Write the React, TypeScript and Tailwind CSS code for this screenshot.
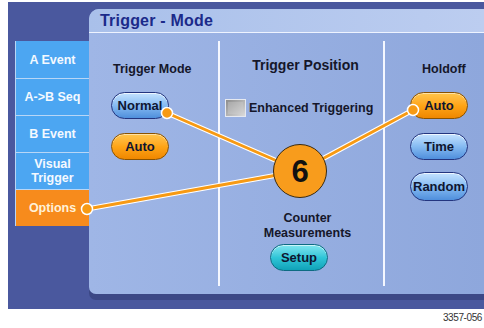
import React from 'react';

const TABS = [
  { label: 'A Event' },
  { label: 'A->B Seq' },
  { label: 'B Event' },
  { label: 'Visual Trigger' },
  { label: 'Options', active: true },
];

const pill = 'w-[58px] h-[27px] rounded-full border-[1.5px] flex items-center justify-center text-[13px] font-bold text-[#0f1630]';
const blue = `${pill} border-[#23357f] bg-gradient-to-b from-[#c4e2ff] via-[#86bbf2] to-[#4f8fdc] shadow-[inset_0_1px_0_rgba(255,255,255,0.7)]`;
const orange = `${pill} border-[#8a5200] bg-gradient-to-b from-[#ffc54a] via-[#ffa516] to-[#ef8700] shadow-[inset_0_1px_0_rgba(255,255,255,0.5)]`;
const teal = `${pill} border-[#0d6b82] bg-gradient-to-b from-[#7de6f0] via-[#2fc6d8] to-[#0fa2b8] shadow-[inset_0_1px_0_rgba(255,255,255,0.6)]`;

export default function App() {
  return (
    <div className="relative w-[484px] h-[328px] bg-white overflow-hidden font-['Liberation_Sans',Arial,sans-serif]">
      <div className="ml-[8px] mt-[2px] h-[307px] bg-[#4a589e] pl-[7px] pt-[7px] flex">
        {/* side tabs */}
        <div className="w-[74px] mt-[32px] self-start flex flex-col border-l border-[#b8d6f6]">
          {TABS.map((t, i) => (
            <div
              key={t.label}
              className={`h-[37px] flex items-center justify-center text-center text-[12.5px] leading-[14px] font-bold ${i > 0 ? 'border-t border-[#b8d6f6]' : ''} ${t.active ? 'bg-[#f78b1c] text-[#fff1d8]' : 'bg-[#4ca6f2] text-[#f4f9ff]'}`}
            >
              {t.label === 'Visual Trigger' ? (<span>Visual<br />Trigger</span>) : t.label}
            </div>
          ))}
        </div>

        {/* panel */}
        <div className="w-[395px] h-[285px] rounded-tl-[10px] rounded-bl-[7px] bg-gradient-to-r from-[#9fb6e6] to-[#8ea7dc] shadow-[0_6px_0_#3c4886] flex flex-col">
          <div className="h-[24px] rounded-tl-[10px] border-b border-[#eef3ff] bg-gradient-to-r from-[#a9c0ea] to-[#bccdf0] pl-[11px] flex items-center">
            <span className="text-[16px] font-bold text-[#1b2a8a] tracking-[0.2px]">Trigger - Mode</span>
          </div>
          <div className="flex-1 flex pt-[8px] pb-[8px]">
            {/* Trigger Mode */}
            <div className="w-[131px] border-r-2 border-[#f4f7ff] pt-[21px]">
              <div className="pl-[24px] text-[12.5px] leading-[14px] font-bold text-[#15172a]">Trigger Mode</div>
              <div className={`${blue} ml-[22px] mt-[16px]`}>Normal</div>
              <div className={`${orange} ml-[22px] mt-[14px]`}>Auto</div>
            </div>
            {/* Trigger Position */}
            <div className="w-[165px] border-r-2 border-[#f4f7ff] pt-[16px] flex flex-col">
              <div className="text-center pl-[8px] text-[14px] leading-[16px] font-bold text-[#15172a]">Trigger Position</div>
              <div className="mt-[26px] pl-[5px] flex items-center gap-[3px]">
                <div className="w-[21px] h-[18px] border border-[#e6e9f0] bg-gradient-to-br from-[#8c8c8c] to-[#dcdcdc] p-[2px]">
                  <div className="w-full h-full bg-gradient-to-br from-[#a9a9a9] to-[#d2d2d2]" />
                </div>
                <span className="text-[12.5px] font-bold text-[#15172a]">Enhanced Triggering</span>
              </div>
              <div className="mt-[93px] pl-[12px] text-center text-[12.5px] leading-[15px] font-bold text-[#15172a]">
                Counter<br />Measurements
              </div>
              <div className={`${teal} ml-[50px] mt-[3px]`}>Setup</div>
            </div>
            {/* Holdoff */}
            <div className="flex-1 pt-[21px]">
              <div className="pl-[37px] text-[12.5px] leading-[14px] font-bold text-[#15172a]">Holdoff</div>
              <div className={`${orange} ml-[25px] mt-[16px]`}>Auto</div>
              <div className={`${blue} ml-[25px] mt-[14px]`}>Time</div>
              <div className={`${blue} ml-[25px] mt-[12px] h-[29px]`}>Random</div>
            </div>
          </div>
        </div>
      </div>
      <div className="pr-[2px] mt-[3px] text-right whitespace-nowrap text-[10px] leading-[12px] text-[#333] tracking-[-0.4px]">3357-056</div>

      {/* callout */}
      <svg className="absolute left-0 top-0" width="484" height="328">
        <g strokeLinecap="round">
          <line x1="167" y1="113" x2="300" y2="171" stroke="#ffffff" strokeWidth="5" />
          <line x1="87" y1="209" x2="300" y2="171" stroke="#ffffff" strokeWidth="5" />
          <line x1="413" y1="110" x2="300" y2="171" stroke="#ffffff" strokeWidth="5" />
          <line x1="167" y1="113" x2="300" y2="171" stroke="#f79a14" strokeWidth="3" />
          <line x1="87" y1="209" x2="300" y2="171" stroke="#f79a14" strokeWidth="3" />
          <line x1="413" y1="110" x2="300" y2="171" stroke="#f79a14" strokeWidth="3" />
        </g>
        <circle cx="167" cy="113" r="5.5" fill="#f79a14" stroke="#ffffff" strokeWidth="1.5" />
        <circle cx="87" cy="209" r="5.5" fill="#f79a14" stroke="#ffffff" strokeWidth="1.5" />
        <circle cx="413" cy="110" r="5.5" fill="#f79a14" stroke="#ffffff" strokeWidth="1.5" />
      </svg>
      <div className="absolute left-[273px] top-[144px] w-[54px] h-[54px] rounded-full bg-[#f89c1c] border border-[#3a2a10] flex items-center justify-center text-[31px] font-bold leading-none text-[#111]">
        6
      </div>
    </div>
  );
}
